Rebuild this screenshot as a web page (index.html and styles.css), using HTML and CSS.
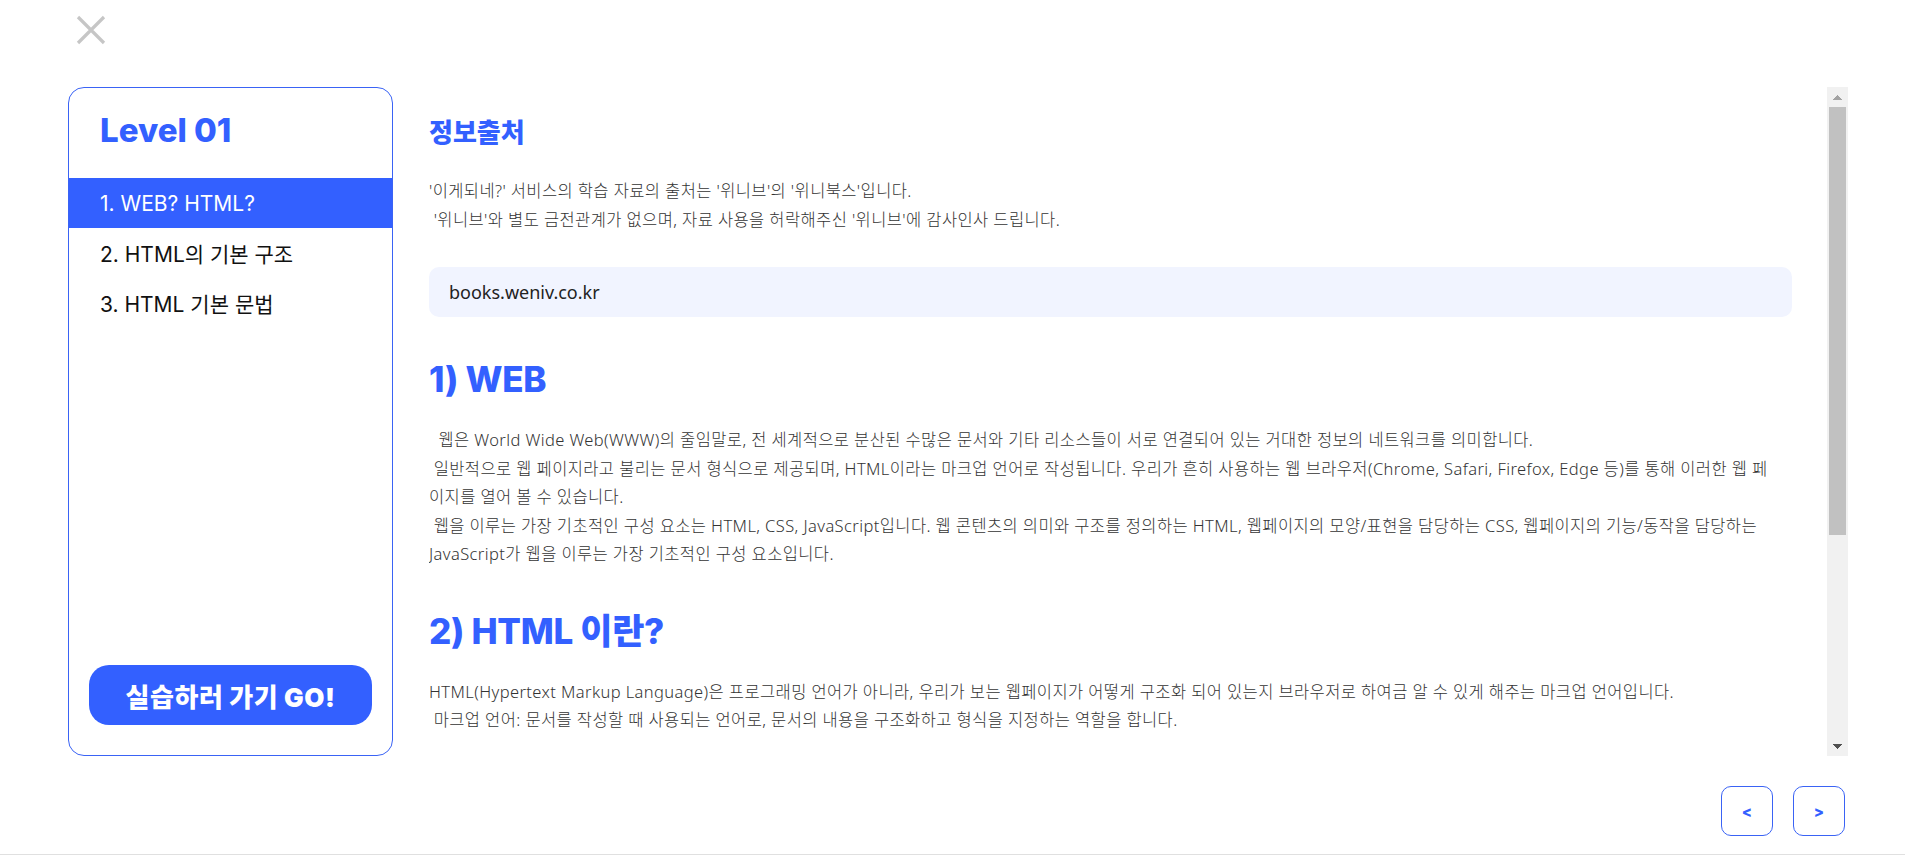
FILE: index.html
```html
<!DOCTYPE html>
<html lang="ko">
<head>
<meta charset="utf-8">
<title>Level 01 - WEB? HTML?</title>
<link rel="stylesheet" href="styles.css">
</head>
<body>
<div class="page">
  <header class="topbar">
    <button class="close-btn" aria-label="닫기">
      <svg width="30" height="30" viewBox="0 0 30 30" aria-hidden="true">
        <path d="M2 2 L28 28 M28 2 L2 28" stroke="#c6c6c6" stroke-width="3.2" fill="none"/>
      </svg>
    </button>
  </header>

  <main class="main">
    <aside class="sidebar">
      <h1 class="level-title">Level 01</h1>
      <ul class="toc">
        <li class="toc-item active">1. WEB? HTML?</li>
        <li class="toc-item">2. HTML의 기본 구조</li>
        <li class="toc-item">3. HTML 기본 문법</li>
      </ul>
      <a class="go-btn" href="#">실습하러 가기 GO!</a>
    </aside>

    <div class="content-wrap">
      <section class="content">
        <h2 class="source-title">정보출처</h2>
        <p class="text">'이게되네?' 서비스의 학습 자료의 출처는 '위니브'의 '위니북스'입니다.<br>&nbsp;'위니브'와 별도 금전관계가 없으며, 자료 사용을 허락해주신 '위니브'에 감사인사 드립니다.</p>
        <div class="source-box">books.weniv.co.kr</div>

        <h2 class="sec-title">1) WEB</h2>
        <p class="text">&nbsp;&nbsp;웹은 World Wide Web(WWW)의 줄임말로, 전 세계적으로 분산된 수많은 문서와 기타 리소스들이 서로 연결되어 있는 거대한 정보의 네트워크를 의미합니다.<br>&nbsp;일반적으로 웹 페이지라고 불리는 문서 형식으로 제공되며, HTML이라는 마크업 언어로 작성됩니다. 우리가 흔히 사용하는 웹 브라우저(Chrome, Safari, Firefox, Edge 등)를 통해 이러한 웹 페이지를 열어 볼 수 있습니다.<br>&nbsp;웹을 이루는 가장 기초적인 구성 요소는 HTML, CSS, JavaScript입니다. 웹 콘텐츠의 의미와 구조를 정의하는 HTML, 웹페이지의 모양/표현을 담당하는 CSS, 웹페이지의 기능/동작을 담당하는 JavaScript가 웹을 이루는 가장 기초적인 구성 요소입니다.</p>

        <h2 class="sec-title">2) HTML 이란?</h2>
        <p class="text">HTML(Hypertext Markup Language)은 프로그래밍 언어가 아니라, 우리가 보는 웹페이지가 어떻게 구조화 되어 있는지 브라우저로 하여금 알 수 있게 해주는 마크업 언어입니다.<br>&nbsp;마크업 언어: 문서를 작성할 때 사용되는 언어로, 문서의 내용을 구조화하고 형식을 지정하는 역할을 합니다.</p>
      </section>

      <div class="scrollbar" aria-hidden="true">
        <div class="sb-btn sb-up"></div>
        <div class="sb-track"><div class="sb-thumb"></div></div>
        <div class="sb-btn sb-down"></div>
      </div>
    </div>
  </main>

  <nav class="pager">
    <button class="pager-btn" aria-label="이전">&lt;</button>
    <button class="pager-btn" aria-label="다음">&gt;</button>
  </nav>
</div>
</body>
</html>
```

FILE: styles.css
```css
* {
  box-sizing: border-box;
}

html, body {
  margin: 0;
  padding: 0;
  background: #ffffff;
}

body {
  font-family: "Noto Sans CJK KR", "Noto Sans", sans-serif;
  color: #222;
  overflow: hidden;
}

.page {
  height: 855px;
  border-bottom: 1px solid #e0e0e0;
  display: flex;
  flex-direction: column;
}

/* top bar */
.topbar {
  height: 87px;
  flex: none;
  padding: 15px 0 0 76px;
}

.close-btn {
  display: block;
  width: 30px;
  height: 30px;
  padding: 0;
  margin: 0;
  border: 0;
  background: none;
  cursor: pointer;
}

.close-btn svg {
  display: block;
}

/* main row */
.main {
  flex: none;
  height: 669px;
  display: flex;
  gap: 36px;
  padding: 0 57px 0 68px;
}

.sidebar {
  flex: none;
  width: 325px;
  height: 100%;
  border: 1px solid #3a63f5;
  border-radius: 16px;
  display: flex;
  flex-direction: column;
  overflow: hidden;
}

.level-title {
  margin: 0;
  padding: 22px 31px 28px;
  height: 90px;
  font-family: "Inter", "Noto Sans CJK KR", sans-serif;
  font-weight: 800;
  font-size: 33px;
  line-height: 40px;
  color: #3360ff;
}

.toc {
  list-style: none;
  margin: 0;
  padding: 0;
}

.toc-item {
  height: 50px;
  padding: 0 31px;
  display: flex;
  align-items: center;
  font-family: "Inter", "Noto Sans CJK KR", sans-serif;
  font-size: 21px;
  font-weight: 400;
  color: #111;
}

.toc-item.active {
  background: #3360ff;
  color: #fff;
}

.go-btn {
  margin: auto 20px 30px;
  height: 60px;
  border-radius: 20px;
  background: #3360ff;
  color: #fff;
  text-decoration: none;
  display: flex;
  align-items: center;
  justify-content: center;
  font-family: "Inter", "Noto Sans CJK KR", sans-serif;
  font-weight: 900;
  font-size: 26px;
  letter-spacing: 0.6px;
}

/* content */
.content-wrap {
  flex: 1;
  min-width: 0;
  height: 100%;
  display: flex;
}

.content {
  flex: 1;
  min-width: 0;
  height: 100%;
  overflow-y: auto;
  padding: 26px 35px 330px 0;
}

.scrollbar {
  flex: none;
  width: 21px;
  height: 100%;
  background: #f1f1f1;
  display: flex;
  flex-direction: column;
}

.sb-btn {
  flex: none;
  height: 20px;
  background-repeat: no-repeat;
  background-position: center;
  background-size: 9px 5px;
}

.sb-up {
  background-image: conic-gradient(from 138deg at 50% 0, #a3a3a3 0 84deg, transparent 84deg 360deg);
}

.sb-down {
  background-image: conic-gradient(from -42deg at 50% 100%, #505050 0 84deg, transparent 84deg 360deg);
}

.sb-track {
  flex: 1;
  padding: 0 2px;
}

.sb-thumb {
  height: 428px;
  background: #c1c1c1;
}

.source-title {
  margin: 0 0 28px;
  font-family: "Noto Sans CJK KR", sans-serif;
  font-weight: 900;
  font-size: 26px;
  line-height: 36px;
  color: #3360ff;
}

.sec-title {
  margin: 40px 0 25px;
  font-family: "Inter", "Noto Sans CJK KR", sans-serif;
  font-weight: 800;
  font-size: 35px;
  line-height: 44px;
  letter-spacing: -0.3px;
  color: #3360ff;
}

.text {
  margin: 0 10px 0 0;
  font-family: "Noto Sans", "Noto Sans CJK KR", sans-serif;
  font-weight: 300;
  font-size: 16.5px;
  line-height: 28.5px;
  letter-spacing: 0.4px;
  color: #333;
}

.source-box {
  margin-top: 33px;
  height: 50px;
  padding: 0 20px;
  display: flex;
  align-items: center;
  background: #f1f4ff;
  border-radius: 10px;
  font-family: "Noto Sans", sans-serif;
  font-size: 18px;
  color: #222;
}

/* pager */
.pager {
  flex: none;
  display: flex;
  justify-content: flex-end;
  gap: 20px;
  padding: 30px 60px 0 0;
}

.pager-btn {
  width: 52px;
  height: 50px;
  border: 1px solid #3a63f5;
  border-radius: 10px;
  background: #fff;
  color: #3360ff;
  font-family: "Inter", sans-serif;
  font-weight: 800;
  font-size: 15px;
  padding: 0;
  cursor: pointer;
}
```
